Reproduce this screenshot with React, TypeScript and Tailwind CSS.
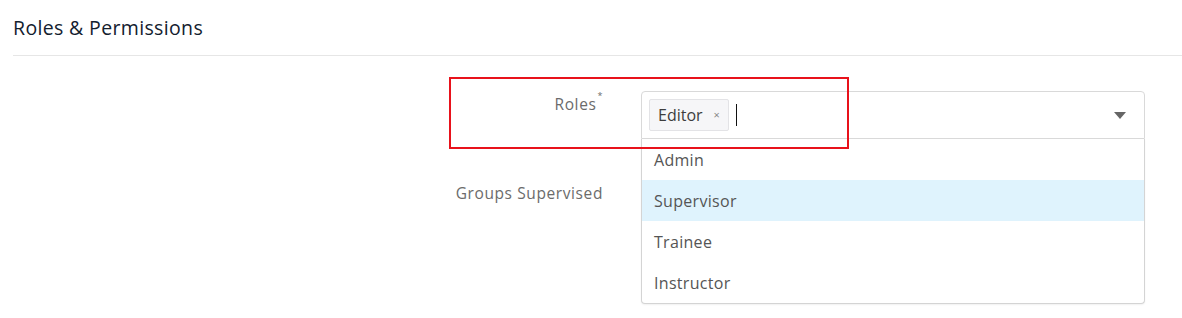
import { useState } from 'react'

const options = ['Admin', 'Supervisor', 'Trainee', 'Instructor']

export default function App() {
  const [active] = useState('Supervisor')

  return (
    <div className="relative w-[1182px] h-[318px] bg-white font-['Open_Sans',sans-serif] overflow-hidden">
      <div className="pl-[13px]">
        <h2 className="h-[56px] flex items-center border-b border-[#e6e6e6] text-[19.5px] text-[#13202e] tracking-[0.35px]">
          Roles &amp; Permissions
        </h2>

        <div className="mt-[35px] flex">
          <div className="w-[590px] pt-[1px] text-right text-[15.5px] leading-6 text-[#6b6b6b] tracking-[0.6px]">
            Roles<sup className="ml-[1px] text-[9px] align-top relative top-[4px]">*</sup>
          </div>

          <div className="relative ml-[38px] w-[504px]">
            {/* control */}
            <div className="h-[48px] flex items-center pl-[7px] pr-[18px] border border-[#d9d9d9] rounded-t-[4px] bg-white">
              <span className="flex items-center h-[32px] pl-[8px] pr-[8px] bg-[#f6f6f8] border border-[#e3e3e6] rounded-[2px] text-[16px] text-[#3d3d3d]">
                Editor
                <span className="ml-[11px] text-[11px] text-[#888]">×</span>
              </span>
              <span className="ml-[7px] w-[1px] h-[22px] bg-[#111]"></span>
              <svg className="ml-auto" width="12" height="7" viewBox="0 0 12 7">
                <path d="M0 0h12L6 7z" fill="#666" />
              </svg>
            </div>

            {/* menu */}
            <ul className="absolute left-0 right-0 top-[48px] z-10 bg-white border border-t-0 border-[#d4d4d4] rounded-b-[4px] shadow-[0_1px_2px_rgba(0,0,0,0.06)]">
              {options.map((o) => (
                <li
                  key={o}
                  className={
                    'h-[41px] flex items-center pl-[12px] text-[16px] text-[#555] tracking-[0.3px] ' +
                    (o === active ? 'bg-[#dff3fd]' : '')
                  }
                >
                  {o}
                </li>
              ))}
            </ul>
          </div>
        </div>

        <div className="mt-[42px] flex">
          <div className="w-[590px] text-right text-[15.5px] leading-6 text-[#6b6b6b] tracking-[0.6px]">Groups Supervised</div>
        </div>
      </div>

      {/* highlight box */}
      <div className="absolute z-20 left-[449px] top-[77px] w-[400px] h-[72px] border-2 border-[#e8121b] pointer-events-none"></div>
    </div>
  )
}
